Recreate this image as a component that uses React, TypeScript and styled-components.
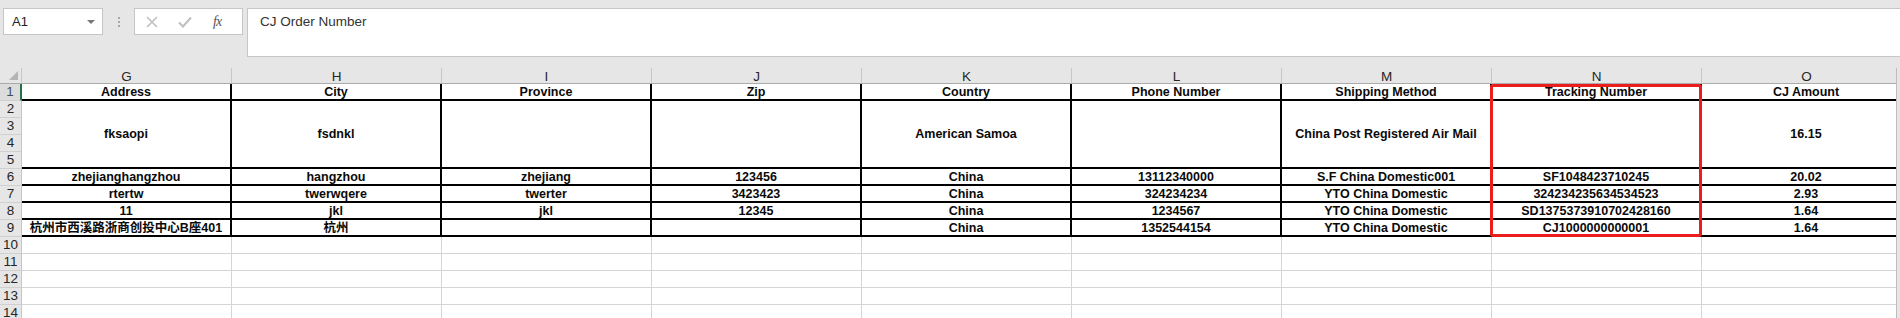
import styled, { createGlobalStyle } from 'styled-components';

const GlobalStyle = createGlobalStyle`
  html, body {
    margin: 0;
    padding: 0;
    background: #e6e6e6;
    overflow: hidden;
  }
  * {
    box-sizing: border-box;
  }
`;

const COL_W = 210;
const ROW_H = 17;

const columns = ['G', 'H', 'I', 'J', 'K', 'L', 'M', 'N', 'O'];

const header = [
  'Address',
  'City',
  'Province',
  'Zip',
  'Country',
  'Phone Number',
  'Shipping Method',
  'Tracking Number',
  'CJ Amount',
];

// rows 2-5 are merged per column
const merged = ['fksaopi', 'fsdnkl', '', '', 'American Samoa', '', 'China Post Registered Air Mail', '', '16.15'];

const rows = [
  ['zhejianghangzhou', 'hangzhou', 'zhejiang', '123456', 'China', '13112340000', 'S.F China Domestic001', 'SF1048423710245', '20.02'],
  ['rtertw', 'twerwqere', 'twerter', '3423423', 'China', '324234234', 'YTO China Domestic', '324234235634534523', '2.93'],
  ['11', 'jkl', 'jkl', '12345', 'China', '1234567', 'YTO China Domestic', 'SD1375373910702428160', '1.64'],
  ['杭州市西溪路浙商创投中心B座401', '杭州', '', '', 'China', '1352544154', 'YTO China Domestic', 'CJ1000000000001', '1.64'],
];

const emptyRows = [10, 11, 12, 13, 14];

const Toolbar = styled.div`
  display: flex;
  align-items: flex-start;
  height: 68px;
  padding: 8px 0 0 3px;
  background: #e6e6e6;
  font-family: 'Liberation Sans', Arial, sans-serif;
`;

const NameBox = styled.div`
  display: flex;
  align-items: center;
  justify-content: space-between;
  width: 100px;
  height: 27px;
  padding: 0 7px 0 8px;
  background: #fff;
  border: 1px solid #c6c6c6;
  font-size: 13px;
  color: #222;
`;

const DropArrow = styled.span`
  width: 0;
  height: 0;
  border-left: 4px solid transparent;
  border-right: 4px solid transparent;
  border-top: 4px solid #777;
`;

const Grip = styled.div`
  display: flex;
  flex-direction: column;
  align-items: center;
  justify-content: center;
  gap: 2px;
  width: 31px;
  height: 27px;
`;

const GripDot = styled.span`
  width: 2px;
  height: 2px;
  background: #a8a8a8;
`;

const FormulaButtons = styled.div`
  display: flex;
  align-items: center;
  gap: 20px;
  width: 109px;
  height: 27px;
  padding-left: 11px;
  background: #fff;
  border: 1px solid #c6c6c6;
`;

const FxLabel = styled.span`
  font-family: 'Liberation Serif', 'Times New Roman', serif;
  font-style: italic;
  font-size: 14px;
  color: #555;
  letter-spacing: -1px;
  margin-left: 1px;
`;

const FormulaInput = styled.div`
  flex: 1;
  height: 49px;
  margin-left: 4px;
  padding: 5px 12px;
  background: #fff;
  border: 1px solid #c6c6c6;
  border-right: none;
  font-size: 13.5px;
  color: #333;
`;

const SheetArea = styled.div`
  display: flex;
  height: 250px;
`;

const Sheet = styled.div`
  position: relative;
  display: grid;
  grid-template-columns: 22px repeat(9, ${COL_W}px);
  grid-template-rows: 16px repeat(14, ${ROW_H}px);
  width: 1896px;
  flex: none;
  overflow: hidden;
  background: #fff;
  font-family: 'Liberation Sans', Arial, 'Noto Sans CJK SC', sans-serif;
`;

const ScrollEdge = styled.div`
  flex: 1;
  background: #e6e6e6;
  border-left: 1px solid #bdbdbd;
`;

const Corner = styled.div`
  grid-column: 1;
  grid-row: 1;
  background: #e6e6e6;
  border-right: 1px solid #c6c6c6;
  border-bottom: 1px solid #ababab;
  display: flex;
  align-items: flex-end;
  justify-content: flex-end;
  padding: 0 3px 3px 0;
`;

const CornerMark = styled.span`
  width: 0;
  height: 0;
  border-left: 9px solid transparent;
  border-bottom: 9px solid #b4b4b4;
`;

const ColHeader = styled.div<{ $col: number }>`
  grid-column: ${({ $col }) => $col};
  grid-row: 1;
  display: flex;
  align-items: center;
  justify-content: center;
  background: #e6e6e6;
  border-right: 1px solid #c6c6c6;
  border-bottom: 1px solid #ababab;
  font-size: 13.5px;
  color: #262626;
  padding-top: 1px;
`;

const RowHeader = styled.div<{ $row: number; $active?: boolean }>`
  grid-column: 1;
  grid-row: ${({ $row }) => $row + 1};
  display: flex;
  align-items: center;
  justify-content: center;
  background: ${({ $active }) => ($active ? '#dcdcdc' : '#e6e6e6')};
  border-right: ${({ $active }) => ($active ? '2px solid #217346' : '1px solid #c6c6c6')};
  border-bottom: 1px solid #d0d0d0;
  font-size: 13.5px;
  color: ${({ $active }) => ($active ? '#3d4f5c' : '#262626')};
  line-height: 1;
`;

const Cell = styled.div<{ $col: number; $row: number; $span?: number; $boxed?: boolean }>`
  grid-column: ${({ $col }) => $col};
  grid-row: ${({ $row, $span = 1 }) => `${$row + 1} / span ${$span}`};
  display: flex;
  align-items: center;
  justify-content: center;
  white-space: nowrap;
  overflow: hidden;
  border-right: ${({ $boxed }) => ($boxed ? '2px solid #000' : '1px solid #d4d4d4')};
  border-bottom: ${({ $boxed }) => ($boxed ? '2px solid #000' : '1px solid #d4d4d4')};
  font-size: 12.5px;
  font-weight: bold;
  color: #0a0a0a;
  line-height: 1;
  padding-top: 1px;
`;

const Highlight = styled.div`
  grid-column: 9;
  grid-row: 2 / span 9;
  margin-left: -2px;
  border: 3px solid #ec1d1d;
  border-radius: 3px;
  pointer-events: none;
  z-index: 2;
`;

const CancelIcon = () => (
  <svg width="12" height="12" viewBox="0 0 12 12">
    <path d="M1 1 L11 11 M11 1 L1 11" stroke="#bfbfbf" strokeWidth="1.6" fill="none" />
  </svg>
);

const ConfirmIcon = () => (
  <svg width="14" height="12" viewBox="0 0 14 12">
    <path d="M1 6.5 L5 10.5 L13 1.5" stroke="#bfbfbf" strokeWidth="2" fill="none" />
  </svg>
);

const App = () => {
  return (
    <>
      <GlobalStyle />
      <Toolbar>
        <NameBox>
          A1
          <DropArrow />
        </NameBox>
        <Grip>
          <GripDot />
          <GripDot />
          <GripDot />
        </Grip>
        <FormulaButtons>
          <CancelIcon />
          <ConfirmIcon />
          <FxLabel>fx</FxLabel>
        </FormulaButtons>
        <FormulaInput>CJ Order Number</FormulaInput>
      </Toolbar>

      <SheetArea>
        <Sheet>
          <Corner>
            <CornerMark />
          </Corner>
          {columns.map((c, i) => (
            <ColHeader key={c} $col={i + 2}>
              {c}
            </ColHeader>
          ))}

          {/* row 1: headers */}
          <RowHeader $row={1} $active>
            1
          </RowHeader>
          {header.map((h, i) => (
            <Cell key={h} $col={i + 2} $row={1} $boxed>
              {h}
            </Cell>
          ))}

          {/* rows 2-5: merged */}
          {[2, 3, 4, 5].map(r => (
            <RowHeader key={r} $row={r}>
              {r}
            </RowHeader>
          ))}
          {merged.map((v, i) => (
            <Cell key={`m${i}`} $col={i + 2} $row={2} $span={4} $boxed>
              {v}
            </Cell>
          ))}

          {/* rows 6-9 */}
          {rows.map((row, ri) => {
            const r = ri + 6;
            return [
              <RowHeader key={`h${r}`} $row={r}>
                {r}
              </RowHeader>,
              ...row.map((v, ci) => (
                <Cell key={`${r}-${ci}`} $col={ci + 2} $row={r} $boxed>
                  {v}
                </Cell>
              )),
            ];
          })}

          {/* empty rows */}
          {emptyRows.map(r => [
            <RowHeader key={`h${r}`} $row={r}>
              {r}
            </RowHeader>,
            ...columns.map((c, ci) => <Cell key={`${r}-${c}`} $col={ci + 2} $row={r} />),
          ])}

          <Highlight />
        </Sheet>
        <ScrollEdge />
      </SheetArea>
    </>
  );
};

export default App;
